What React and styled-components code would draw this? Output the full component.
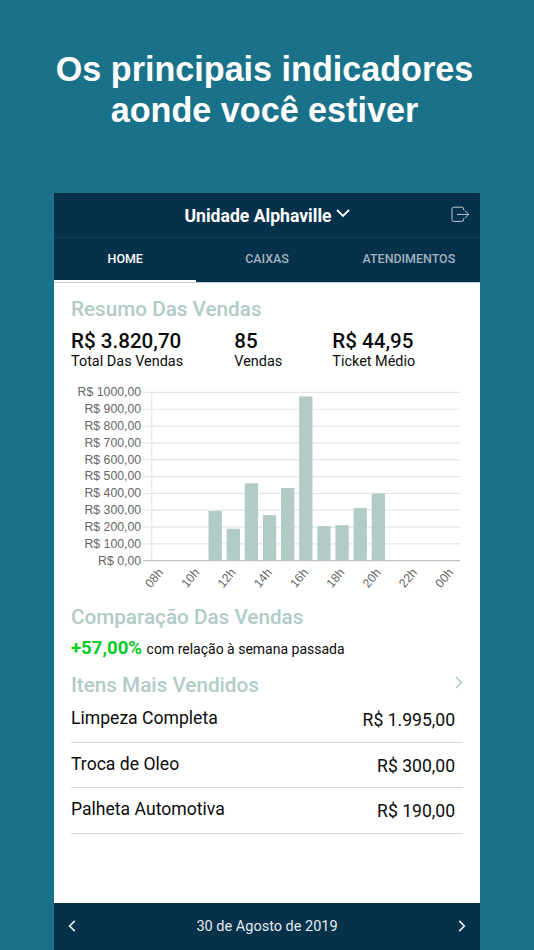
import React, { useState } from 'react'
import styled, { createGlobalStyle } from 'styled-components'

const colors = {
  teal: '#1a728a',
  navy: '#05314b',
  sage: '#b1cbc6',
  green: '#05cb26',
}

const GlobalStyle = createGlobalStyle`
  * {
    box-sizing: border-box;
  }

  body {
    margin: 0;
    background: ${colors.teal};
    font-family: Roboto, sans-serif;
    color: #0c0c0c;
  }

  button {
    appearance: none;
    border: 0;
    background: none;
    padding: 0;
    margin: 0;
    font: inherit;
    color: inherit;
  }
`

const Page = styled.main`
  display: flex;
  flex-direction: column;
  height: 950px;
  overflow: hidden;
  background: ${colors.teal};
`

const Headline = styled.h1`
  flex: 0 0 192.5px;
  margin: 0;
  padding: 48.5px 5px 0 0;
  font: bold 34.15px/41.5px 'Liberation Sans', sans-serif;
  text-align: center;
  color: #fff;
`

const Screen = styled.section`
  display: flex;
  flex: 1;
  flex-direction: column;
  width: 425.5px;
  margin-left: 54.3px;
  background: #fff;
`

const Header = styled.header`
  display: grid;
  grid-template-columns: 36px 1fr 36px;
  align-items: center;
  height: 45.5px;
  background: ${colors.navy};
  border-bottom: 1px solid #173f57;
  color: #fff;
`

const UnitButton = styled.button`
  display: flex;
  grid-column: 2;
  align-items: center;
  justify-content: center;
  gap: 4px;
  padding-top: 2px;
  font-size: 17.6px;
  font-weight: 700;

  svg {
    margin-bottom: 5px;
  }
`

const LogoutButton = styled.button`
  display: flex;
  padding-left: 7.5px;
`

const Tabs = styled.nav`
  display: grid;
  grid-template-columns: repeat(3, 1fr);
  height: 43.5px;
  background: ${colors.navy};
`

const Tab = styled.button`
  border-bottom: 2px solid ${props => (props.$active ? '#fff' : 'transparent')};
  color: ${props => (props.$active ? '#fff' : '#a3b2bc')};
  font-size: 12.45px;
  font-weight: 500;
`

const Content = styled.div`
  flex: 1;
  padding: 14px 16.7px 0;
  border-top: 1px solid #c9ced2;
`

const SectionTitle = styled.h2`
  display: flex;
  align-items: center;
  justify-content: space-between;
  margin: 0;
  font-size: 20.7px;
  font-weight: 500;
  line-height: 24px;
  color: ${colors.sage};

  svg {
    margin-bottom: 4px;
  }
`

const Summary = styled.div`
  display: grid;
  grid-template-columns: 163.3px 98px 1fr;
  margin-top: 8px;
`

const Metric = styled.div`
  font-size: 14.45px;
  line-height: 18px;
`

const MetricValue = styled.strong`
  display: block;
  font-size: 20.6px;
  font-weight: 500;
  line-height: 24px;
`

const Chart = styled.svg`
  display: block;
  width: 392px;
  height: 216px;
  margin: 14px 0 4.5px;
  font: 12.3px 'Liberation Sans', sans-serif;
  fill: #666;
`

const Comparison = styled.p`
  margin: 6.5px 0 12px;
  font-size: 14px;
  line-height: 24px;
`

const Growth = styled.strong`
  margin-right: 1px;
  font-size: 18.6px;
  font-weight: 700;
  color: ${colors.green};
`

const Items = styled.ul`
  list-style: none;
  margin: 0;
  padding: 0.5px 0 0;
`

const Item = styled.li`
  display: flex;
  justify-content: space-between;
  height: 45.6px;
  padding: 11px 8px 0 0;
  border-bottom: 1.5px solid #d5d6da;
  font-size: 17.6px;
  line-height: 20px;
`

const Price = styled.span`
  padding-top: 2px;
`

const DateBar = styled.footer`
  display: flex;
  align-items: center;
  justify-content: space-between;
  height: 47px;
  padding: 0 14px 1px;
  background: ${colors.navy};
  color: #e6ebee;
  font-size: 14.5px;
`

const tabs = ['HOME', 'CAIXAS', 'ATENDIMENTOS']

const metrics = [
  { value: 'R$ 3.820,70', label: 'Total Das Vendas' },
  { value: '85', label: 'Vendas' },
  { value: 'R$ 44,95', label: 'Ticket Médio' },
]

// one entry per hour, from 08h to 00h
const sales = [0, 0, 0, 295, 190, 460, 271, 432, 976, 205, 211, 313, 399, 0, 0, 0, 0]

const items = [
  { name: 'Limpeza Completa', price: 'R$ 1.995,00' },
  { name: 'Troca de Oleo', price: 'R$ 300,00' },
  { name: 'Palheta Automotiva', price: 'R$ 190,00' },
]

const Chevron = ({ direction, width, height, stroke = 1.8 }) => {
  const paths = {
    down: 'M1 1 L7 7 L13 1',
    left: 'M7 1 L1.5 6.5 L7 12',
    right: 'M1 1 L6.5 6.5 L1 12',
  }
  const box = direction === 'down' ? '0 0 14 8' : '0 0 8 13'

  return (
    <svg
      width={width}
      height={height}
      viewBox={box}
      fill="none"
      stroke="currentColor"
      strokeWidth={stroke}
    >
      <path d={paths[direction]} />
    </svg>
  )
}

const LogoutIcon = () => (
  <svg width="20" height="17" fill="none" stroke="#bdc9d0" strokeWidth="1">
    <path d="M12.5 4V2.8Q12.5 1.2 10.9 1.2H2.6Q1 1.2 1 2.8V13.8Q1 15.4 2.6 15.4H10.9Q12.5 15.4 12.5 13.8V12.4" />
    <path d="M6 8.4H17.8M13.6 4.3L17.8 8.4L13.6 12.5" />
  </svg>
)

const SalesChart = () => {
  const left = 80.7
  const right = 389
  const top = 7.4
  const bottom = 175.7
  const step = (right - left) / sales.length
  const yFor = value => bottom - (value / 1000) * (bottom - top)
  const ticks = Array.from({ length: 11 }, (_, i) => i * 100)

  return (
    <Chart viewBox="0 0 392 216">
      {ticks.map(tick => (
        <g key={tick}>
          <line
            x1={left - 9}
            x2={right}
            y1={yFor(tick)}
            y2={yFor(tick)}
            stroke={tick ? '#e5e5e5' : '#c2c2c2'}
            strokeWidth="1.2"
          />
          <text x="70.2" y={yFor(tick) + 3.9} textAnchor="end">
            {`R$ ${tick},00`}
          </text>
        </g>
      ))}
      <line x1={left} x2={left} y1={top} y2={bottom + 1} stroke="#e5e5e5" strokeWidth="1.2" />
      {sales.map((value, i) => (
        <rect
          key={i}
          x={left + step * i + 2.4}
          y={yFor(value)}
          width="13.3"
          height={bottom - yFor(value)}
          fill={colors.sage}
        />
      ))}
      {sales.map((value, i) => {
        if (i % 2) return null
        const hour = String((i + 8) % 24).padStart(2, '0')
        return (
          <text
            key={i}
            textAnchor="end"
            transform={`translate(${left + step * (i + 0.5)} 185.2) rotate(-50)`}
            dy="4"
          >
            {`${hour}h`}
          </text>
        )
      })}
    </Chart>
  )
}

const App = () => {
  const [activeTab, setActiveTab] = useState(0)

  return (
    <Page>
      <GlobalStyle />
      <Headline>
        Os principais indicadores
        <br />
        aonde você estiver
      </Headline>
      <Screen>
        <Header>
          <UnitButton>
            Unidade Alphaville
            <Chevron direction="down" width={14} height={8} />
          </UnitButton>
          <LogoutButton aria-label="Sair">
            <LogoutIcon />
          </LogoutButton>
        </Header>
        <Tabs>
          {tabs.map((tab, index) => (
            <Tab
              key={tab}
              $active={index === activeTab}
              onClick={() => setActiveTab(index)}
            >
              {tab}
            </Tab>
          ))}
        </Tabs>
        <Content>
          <SectionTitle>Resumo Das Vendas</SectionTitle>
          <Summary>
            {metrics.map(metric => (
              <Metric key={metric.label}>
                <MetricValue>{metric.value}</MetricValue>
                {metric.label}
              </Metric>
            ))}
          </Summary>
          <SalesChart />
          <SectionTitle>Comparação Das Vendas</SectionTitle>
          <Comparison>
            <Growth>+57,00%</Growth> com relação à semana passada
          </Comparison>
          <SectionTitle>
            Itens Mais Vendidos
            <Chevron direction="right" width={8} height={13} stroke={1.6} />
          </SectionTitle>
          <Items>
            {items.map(item => (
              <Item key={item.name}>
                {item.name}
                <Price>{item.price}</Price>
              </Item>
            ))}
          </Items>
        </Content>
        <DateBar>
          <Chevron direction="left" width={8} height={12} />
          30 de Agosto de 2019
          <Chevron direction="right" width={8} height={12} />
        </DateBar>
      </Screen>
    </Page>
  )
}

export default App
